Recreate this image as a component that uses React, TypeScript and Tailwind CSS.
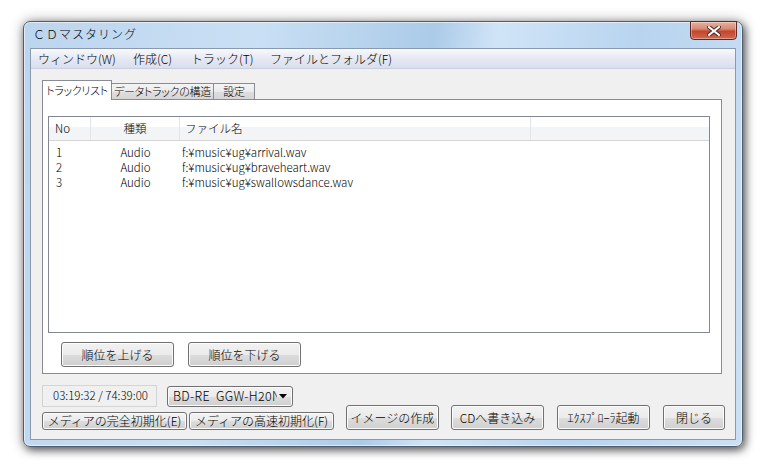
import React from 'react';

const jp = "font-['Noto_Sans_CJK_JP','Noto_Sans',sans-serif]";

const btn =
  'flex items-center justify-center rounded-[3px] border border-[#707070] bg-[linear-gradient(to_bottom,#f2f2f2_0%,#ebebeb_50%,#dddddd_51%,#cfcfcf_100%)] shadow-[inset_0_0_0_1px_#fcfcfc] text-[12px] leading-none text-black font-light whitespace-nowrap';

const rows = [
  { no: '1', kind: 'Audio', file: 'f:¥music¥ug¥arrival.wav' },
  { no: '2', kind: 'Audio', file: 'f:¥music¥ug¥braveheart.wav' },
  { no: '3', kind: 'Audio', file: 'f:¥music¥ug¥swallowsdance.wav' },
];

const CloseButton = () => (
  <div className="ml-auto mr-[5px] -mt-px flex h-[19px] w-[47px] items-center justify-center rounded-b-[4px] border border-[#5e2a22] bg-[linear-gradient(to_bottom,#eab0a0_0%,#d98a74_40%,#c4452c_55%,#d06a52_100%)] shadow-[inset_0_0_0_1px_rgba(255,255,255,0.35)]">
    <svg width="14" height="10" viewBox="0 0 14 10">
      <path d="M2 1 L12 9 M12 1 L2 9" stroke="#4a2a28" strokeWidth="4" strokeLinecap="square" />
      <path d="M2 1 L12 9 M12 1 L2 9" stroke="#ffffff" strokeWidth="2" strokeLinecap="square" />
    </svg>
  </div>
);

export default function App() {
  return (
    <div className={`h-[470px] w-[766px] overflow-hidden bg-white pl-[23px] pt-[21px] ${jp}`}>
      {/* Aero window */}
      <div className="flex h-[426px] w-[720px] flex-col rounded-[7px] border border-[#4f5d6c] bg-[linear-gradient(100deg,#bcd5ee_0%,#c9dff4_30%,#abcbe8_52%,#d0e4f7_60%,#b8d4ef_78%,#cbe0f5_100%)] shadow-[inset_0_0_0_1px_rgba(255,255,255,0.55),2px_3px_8px_rgba(0,0,0,0.6),0_0_14px_rgba(0,0,0,0.3)]">
        {/* title bar */}
        <div className="flex h-[26px] items-start">
          <span className="ml-[9px] mt-[4px] text-[12px] font-light leading-[16px] tracking-[1px] text-black">
            ＣＤマスタリング
          </span>
          <CloseButton />
        </div>

        {/* client area */}
        <div className="mx-[6px] mb-[6px] flex flex-1 flex-col border border-[#8a99ad] bg-[#f0f0f0]">
          {/* menu */}
          <div className="flex h-[20px] items-center border-b border-[#c9cfdf] bg-[linear-gradient(to_bottom,#f8f9fc_0%,#e6e9f3_50%,#dadfed_100%)] pl-[7px] text-[12px] font-light leading-none text-black">
            <span className="w-[95px]">ウィンドウ(W)</span>
            <span className="w-[58px]">作成(C)</span>
            <span className="w-[79px]">トラック(T)</span>
            <span>ファイルとフォルダ(F)</span>
          </div>

          {/* tabs */}
          <div className="ml-[11px] mt-[11px] flex items-end whitespace-nowrap text-[11px] font-light leading-none tracking-[-0.3px] text-black [font-feature-settings:'palt']">
            <div className="relative z-10 -mb-px flex h-[20px] w-[70px] items-center justify-center border border-b-0 border-[#898c95] bg-white">
              トラックリスト
            </div>
            <div className="flex h-[16px] w-[102px] items-center justify-center border border-b-0 border-l-0 border-[#898c95] bg-[linear-gradient(to_bottom,#f4f4f4_0%,#ebebeb_50%,#dedede_51%,#d6d6d6_100%)]">
              データトラックの構造
            </div>
            <div className="flex h-[16px] w-[41px] items-center justify-center border border-b-0 border-l-0 border-[#898c95] bg-[linear-gradient(to_bottom,#f4f4f4_0%,#ebebeb_50%,#dedede_51%,#d6d6d6_100%)]">
              設定
            </div>
          </div>

          {/* tab pane */}
          <div className="ml-[11px] flex h-[275px] w-[680px] flex-col border border-[#898c95] bg-white">
            {/* list view */}
            <div className="ml-[5px] mt-[16px] h-[217px] w-[662px] border border-[#828790] bg-white text-[11.5px] font-light leading-[15px] text-black">
              <div className="flex h-[24px] border-b border-[#d5d5d5] bg-[linear-gradient(to_bottom,#ffffff_0%,#ffffff_42%,#f3f4f6_43%,#f3f4f6_100%)]">
                <div className="flex w-[42px] items-center border-r border-[#e3e5e8] pl-[6px]">No</div>
                <div className="flex w-[89px] items-center justify-center border-r border-[#e3e5e8]">種類</div>
                <div className="flex w-[351px] items-center border-r border-[#e3e5e8] pl-[5px]">ファイル名</div>
                <div className="flex-1" />
              </div>
              <div className="pt-[4px]">
                {rows.map((r) => (
                  <div key={r.no} className="flex h-[15px] items-center overflow-hidden">
                    <div className="w-[42px] pl-[7px]">{r.no}</div>
                    <div className="w-[89px] text-center">{r.kind}</div>
                    <div className="pl-[2px]">{r.file}</div>
                  </div>
                ))}
              </div>
            </div>

            <div className="ml-[18px] mt-[9px] flex gap-[14px]">
              <button className={`${btn} h-[25px] w-[113px]`}>順位を上げる</button>
              <button className={`${btn} h-[25px] w-[113px]`}>順位を下げる</button>
            </div>
          </div>

          {/* bottom controls */}
          <div className="ml-[11px] mt-[11px] flex items-start">
            <div className="flex flex-col">
              <div className="flex items-start">
                <div className="flex h-[22px] w-[115px] items-center border border-[#d4d4d4] bg-[#f0f0f0] pl-[10px] text-[11.5px] font-light leading-none text-black">
                  03:19:32 / 74:39:00
                </div>
                <div className={`${btn} ml-[10px] mt-px h-[21px] w-[126px] justify-start pl-[5px]`}>
                  <span className="w-[104px] overflow-hidden whitespace-pre text-[12.5px] tracking-[0.3px]">
                    BD-RE  GGW-H20N
                  </span>
                  <svg width="8" height="5" viewBox="0 0 8 5" className="ml-[2px]">
                    <path d="M0 0 L8 0 L4 4.5 Z" fill="#000" />
                  </svg>
                </div>
              </div>
              <div className="mt-[5px] flex gap-[2px]">
                <button className={`${btn} h-[18px] w-[145px] border-[#5a5a5a]`}>メディアの完全初期化(E)</button>
                <button className={`${btn} h-[18px] w-[145px] border-[#5a5a5a]`}>メディアの高速初期化(F)</button>
              </div>
            </div>

            <div className="ml-[12px] mt-[20px] flex">
              <button className={`${btn} h-[25px] w-[93px]`}>イメージの作成</button>
              <button className={`${btn} ml-[12px] h-[25px] w-[93px]`}>CDへ書き込み</button>
              <button className={`${btn} ml-[13px] h-[25px] w-[93px]`}>ｴｸｽﾌﾟﾛｰﾗ起動</button>
              <button className={`${btn} ml-[13px] h-[25px] w-[62px]`}>閉じる</button>
            </div>
          </div>
        </div>
      </div>
    </div>
  );
}
